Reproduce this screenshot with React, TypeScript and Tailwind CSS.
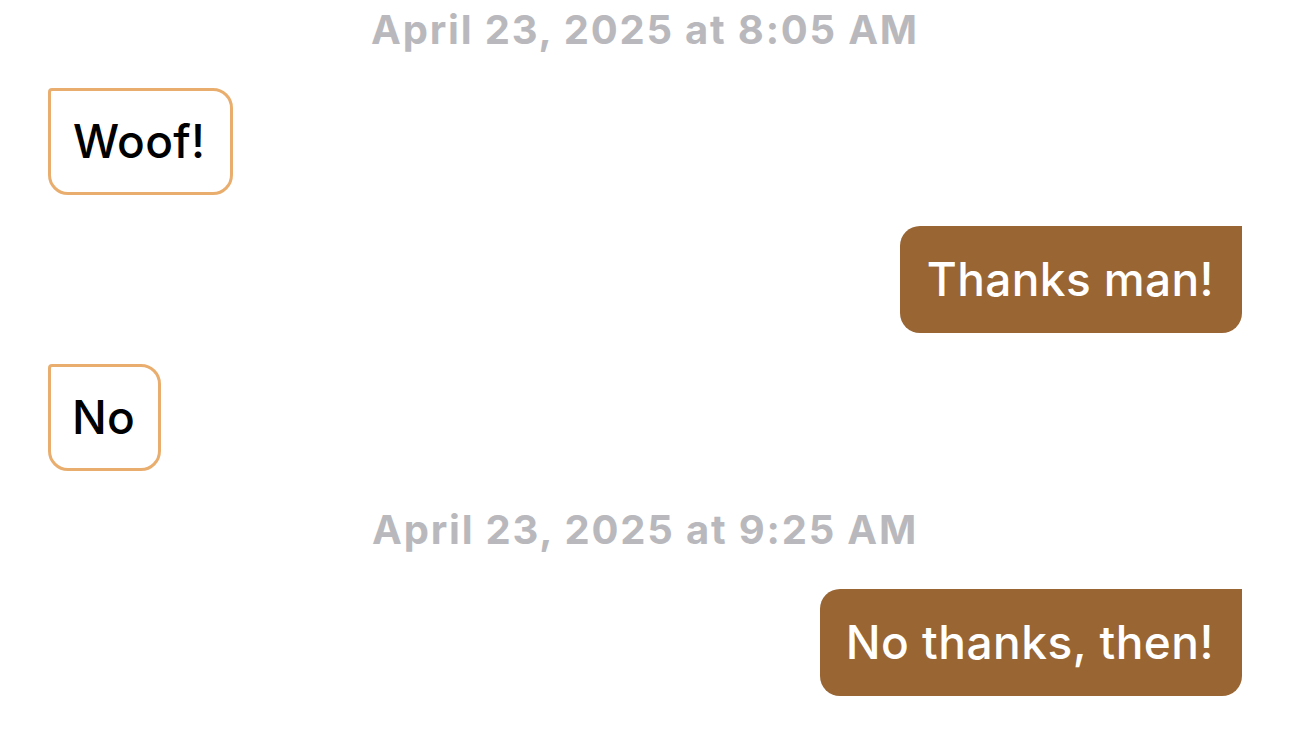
export default function App() {
  const font = { fontFamily: "Inter, 'Noto Sans', sans-serif" };
  return (
    <div className="w-[1290px] h-[745px] bg-white overflow-hidden flex flex-col px-[48px]" style={font}>
      <div className="h-[60px] flex items-center justify-center text-[40px] font-bold text-[#b9b9bd] tracking-[1.8px] leading-none">
        April 23, 2025 at 8:05 AM
      </div>
      <div className="mt-[28px] flex">
        <div className="h-[107px] pl-[22px] pr-[25px] flex items-center border-[3px] border-[#e9ae6e] rounded-[20px] rounded-tl-[4px] text-[46px] font-medium text-black tracking-[0.3px]">
          Woof!
        </div>
      </div>
      <div className="mt-[31px] flex justify-end">
        <div className="h-[107px] pl-[27px] pr-[28px] flex items-center bg-[#986533] rounded-[20px] rounded-tr-none text-[46px] font-medium text-white tracking-[0.4px]">
          Thanks man!
        </div>
      </div>
      <div className="mt-[31px] flex">
        <div className="h-[107px] pl-[21px] pr-[23px] flex items-center border-[3px] border-[#e9ae6e] rounded-[20px] rounded-tl-[4px] text-[46px] font-medium text-black tracking-[0.3px]">
          No
        </div>
      </div>
      <div className="mt-[29px] h-[60px] flex items-center justify-center text-[40px] font-bold text-[#b9b9bd] tracking-[1.8px] leading-none">
        April 23, 2025 at 9:25 AM
      </div>
      <div className="mt-[29px] flex justify-end">
        <div className="h-[107px] pl-[26px] pr-[28px] flex items-center bg-[#986533] rounded-[20px] rounded-tr-none text-[46px] font-medium text-white tracking-[0.5px]">
          No thanks, then!
        </div>
      </div>
    </div>
  );
}
